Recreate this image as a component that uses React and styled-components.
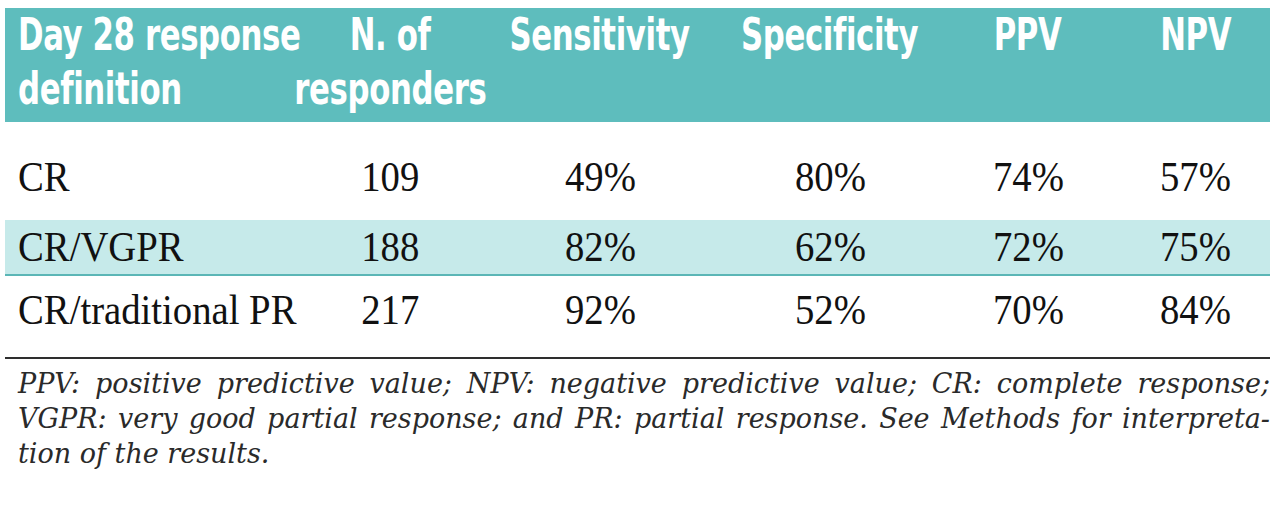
import React from "react";
import styled, { createGlobalStyle } from "styled-components";

const COLS = "300px 170px 250px 210px 186px 1fr";

const headers = [
  ["Day 28 response", "definition"],
  ["N. of", "responders"],
  ["Sensitivity"],
  ["Specificity"],
  ["PPV"],
  ["NPV"],
];

const rows = [
  { cells: ["CR", "109", "49%", "80%", "74%", "57%"], shaded: false, pad: "12px 0 0", h: 86 },
  { cells: ["CR/VGPR", "188", "82%", "62%", "72%", "75%"], shaded: true, pad: "0", h: 54 },
  { cells: ["CR/traditional PR", "217", "92%", "52%", "70%", "84%"], shaded: false, pad: "0", h: 68 },
];

const App = () => {
  return (
    <>
      <GlobalStyle />
      <Page>
        <Table>
          <HeadRow>
            {headers.map((lines, i) => (
              <HeadCell key={i} first={i === 0}>
                {lines.map((l) => (
                  <HeadText key={l} first={i === 0}>
                    {l}
                  </HeadText>
                ))}
              </HeadCell>
            ))}
          </HeadRow>
          <Body>
            {rows.map((r) => (
              <Row key={r.cells[0]} shaded={r.shaded} pad={r.pad} h={r.h}>
                {r.cells.map((c, i) => (
                  <Cell key={i} first={i === 0}>
                    <CellText first={i === 0}>{c}</CellText>
                  </Cell>
                ))}
              </Row>
            ))}
          </Body>
        </Table>
        <Footnote>
          <FootLine justify>
            PPV: positive predictive value; NPV: negative predictive value; CR: complete response;
          </FootLine>
          <FootLine justify>
            VGPR: very good partial response; and PR: partial response. See Methods for interpreta-
          </FootLine>
          <FootLine>tion of the results.</FootLine>
        </Footnote>
      </Page>
    </>
  );
};

export default App;

// Styled Components

const GlobalStyle = createGlobalStyle`
  html, body {
    margin: 0;
    padding: 0;
    background: #ffffff;
  }
`;

const Page = styled.div`
  width: 1280px;
  padding: 8px 10px 0 5px;
  box-sizing: border-box;
  color: #111111;
`;

const Table = styled.div`
  display: flex;
  flex-direction: column;
`;

const HeadRow = styled.div`
  display: grid;
  grid-template-columns: ${COLS};
  height: 114px;
  box-sizing: border-box;
  background: #5ebdbd;
  color: #ffffff;
  font-family: "DejaVu Sans Condensed", "DejaVu Sans", sans-serif;
  font-weight: bold;
  font-size: 45px;
  line-height: 54px;
`;

const HeadCell = styled.div`
  display: flex;
  flex-direction: column;
  align-items: ${(p) => (p.first ? "flex-start" : "center")};
  padding-left: ${(p) => (p.first ? "13px" : "0")};
  white-space: nowrap;
`;

/* the header face is a very narrow grotesque; squeeze the condensed bold */
const HeadText = styled.span`
  display: inline-block;
  transform: scaleX(0.76);
  transform-origin: ${(p) => (p.first ? "left center" : "center")};
  letter-spacing: -0.5px;
`;

const Body = styled.div`
  display: flex;
  flex-direction: column;
  padding-bottom: 13px;
  border-bottom: 2px solid #2e2e2e;
`;

const Row = styled.div`
  display: grid;
  grid-template-columns: ${COLS};
  align-items: center;
  height: ${(p) => p.h}px;
  padding: ${(p) => p.pad};
  background: ${(p) => (p.shaded ? "#c6eaea" : "transparent")};
  border-bottom: ${(p) => (p.shaded ? "2px solid #5bb6b6" : "none")};
  font-family: "Liberation Serif", "Times New Roman", serif;
  font-size: 43px;
  line-height: 48px;
`;

const Cell = styled.div`
  display: flex;
  justify-content: ${(p) => (p.first ? "flex-start" : "center")};
  padding-left: ${(p) => (p.first ? "13px" : "0")};
  white-space: nowrap;
`;

const CellText = styled.span`
  display: inline-block;
  transform: scaleX(0.9);
  transform-origin: ${(p) => (p.first ? "left center" : "center")};
`;

const Footnote = styled.div`
  padding: 7px 0 0 13px;
  font-family: "DejaVu Serif", serif;
  font-style: italic;
  font-size: 27px;
  line-height: 35px;
  color: #2a2a2a;
`;

const FootLine = styled.div`
  text-align: ${(p) => (p.justify ? "justify" : "left")};
  text-align-last: ${(p) => (p.justify ? "justify" : "left")};
  white-space: nowrap;
`;
